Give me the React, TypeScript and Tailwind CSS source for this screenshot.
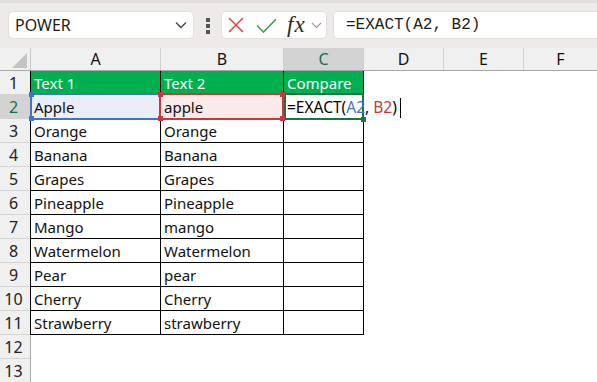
import React from "react";

const rows: [string, string][] = [
  ["Apple", "apple"],
  ["Orange", "Orange"],
  ["Banana", "Banana"],
  ["Grapes", "Grapes"],
  ["Pineapple", "Pineapple"],
  ["Mango", "mango"],
  ["Watermelon", "Watermelon"],
  ["Pear", "pear"],
  ["Cherry", "Cherry"],
  ["Strawberry", "strawberry"],
];

const Handle = ({ pos, color }: { pos: string; color: string }) => (
  <span className={`absolute w-[5px] h-[5px] ${pos} ${color}`} />
);

const Toolbar = () => (
  <div className="h-[48px] border-t-[3px] border-[#e2dedd] bg-[#eeeae9] flex items-start pt-[8px]">
    <div className="ml-[8px] w-[186px] h-[28px] bg-white rounded-[5px] border border-[#e3dfde] flex items-center justify-between pl-[6px] pr-[6px]">
      <span className="text-[16px] text-[#1b1b1b]">POWER</span>
      <svg width="12" height="8" viewBox="0 0 12 8" fill="none">
        <path d="M1 1.5 L6 6.5 L11 1.5" stroke="#444" strokeWidth="1.3" />
      </svg>
    </div>
    <div className="ml-[12px] mt-[7px] flex flex-col gap-[2px]">
      <span className="w-[4px] h-[4px] bg-[#555]" />
      <span className="w-[4px] h-[4px] bg-[#555]" />
      <span className="w-[4px] h-[4px] bg-[#555]" />
    </div>
    <div className="ml-[11px] w-[106px] h-[28px] bg-white rounded-[5px] border border-[#e3dfde] flex items-center pl-[6px]">
      <svg width="16" height="16" viewBox="0 0 16 16" fill="none">
        <path d="M1 1 L15 15 M15 1 L1 15" stroke="#e5453d" strokeWidth="1.5" />
      </svg>
      <svg className="ml-[12px]" width="21" height="15" viewBox="0 0 21 15" fill="none">
        <path d="M1 7.5 L7.5 14 L20 1.2" stroke="#3d9f4c" strokeWidth="1.6" />
      </svg>
      <span className="ml-[10px] font-['Liberation_Serif',serif] italic text-[23px] leading-none tracking-[1px] text-[#2a2a2a] -mt-[2px]">
        fx
      </span>
      <svg className="ml-[5px]" width="11" height="7" viewBox="0 0 11 7" fill="none">
        <path d="M1 1 L5.5 5.5 L10 1" stroke="#9a9a9a" strokeWidth="1.2" />
      </svg>
    </div>
    <div className="ml-[6px] flex-1 h-[28px] bg-white rounded-l-[5px] border border-r-0 border-[#e3dfde] flex items-center pl-[12px]">
      <span className="font-['Liberation_Mono',monospace] text-[16px] text-[#1b1b1b]">
        =EXACT(A2, B2)
      </span>
    </div>
  </div>
);

const ColumnHeaders = () => {
  const cols = [
    { k: "A", w: "w-[130px]" },
    { k: "B", w: "w-[123px]" },
    { k: "C", w: "w-[80px]" },
    { k: "D", w: "w-[80px]" },
    { k: "E", w: "w-[80px]" },
  ];
  return (
    <div className="flex h-[23px] bg-[#f0f0f0] border-b border-[#a8a8a8]">
      <div className="w-[31px] border-r border-[#c8c8c8] relative">
        <svg className="absolute left-[12px] top-[5px]" width="15" height="15" viewBox="0 0 15 15">
          <path d="M15 0 L15 15 L0 15 Z" fill="#c3c3c3" />
        </svg>
      </div>
      {cols.map((c) => (
        <div
          key={c.k}
          className={`${c.w} border-r border-[#d0d0d0] flex items-center justify-center text-[16px] ${
            c.k === "C" ? "bg-[#d3d3d3] text-[#1d6b4f]" : "text-[#111]"
          }`}
        >
          {c.k}
        </div>
      ))}
      <div className="flex-1 flex items-center justify-center text-[16px] text-[#111]">F</div>
    </div>
  );
};

const RowHeader = ({ n, selected }: { n: number; selected?: boolean }) => (
  <div
    className={`w-[30px] h-full border-b border-[#d4d4d4] flex items-center justify-center pr-[3px] pt-[1px] text-[16px] ${
      selected ? "bg-[#d3d3d3] text-[#1d6b4f]" : "bg-[#f0f0f0] text-[#222]"
    }`}
  >
    {n}
  </div>
);

const EmptyTail = () => (
  <>
    <div className="w-[80px]" />
    <div className="w-[80px]" />
    <div className="flex-1" />
  </>
);

export default function App() {
  return (
    <div className="w-[597px] h-[382px] overflow-hidden bg-white font-['Noto_Sans',sans-serif]">
      <Toolbar />
      <ColumnHeaders />

      {/* row 1: table header */}
      <div className="flex h-[24px] text-[15px] leading-[25px]">
        <RowHeader n={1} />
        <div className="w-[131px] bg-[#00b050] text-white border-l border-r border-b border-black pl-[3px]">Text 1</div>
        <div className="w-[123px] bg-[#00b050] text-white border-r border-b border-black pl-[3px]">Text 2</div>
        <div className="w-[80px] bg-[#00b050] text-white border-r border-b border-black pl-[3px]">Compare</div>
        <EmptyTail />
      </div>

      {rows.map(([a, b], i) => {
        const n = i + 2;
        const active = n === 2;
        return (
          <div key={n} className="flex h-[24px] text-[15px] leading-[25px] text-[#111]">
            <RowHeader n={n} selected={active} />
            <div
              className={`w-[131px] border-l border-r border-b border-black pl-[3px] relative ${
                active ? "bg-[#e9eef9]" : ""
              }`}
            >
              {active && (
                <>
                  <span className="absolute -top-[2px] -left-[1px] -right-[1px] -bottom-[2px] border-2 border-[#4472c4] z-10" />
                  <Handle pos="-top-[3px] -left-[2px] z-20" color="bg-[#4472c4]" />
                  <Handle pos="-bottom-[3px] -left-[2px] z-20" color="bg-[#4472c4]" />
                </>
              )}
              <span className="relative z-20">{a}</span>
            </div>
            <div
              className={`w-[123px] border-r border-b border-black pl-[3px] relative ${
                active ? "bg-[#faeaea]" : ""
              }`}
            >
              {active && (
                <>
                  <span className="absolute -top-[2px] -left-[2px] -right-[1px] -bottom-[2px] border-2 border-[#c7393c] z-10" />
                  <Handle pos="-top-[3px] -left-[3px] z-20" color="bg-[#c7393c]" />
                  <Handle pos="-top-[3px] -right-[2px] z-20" color="bg-[#c7393c]" />
                  <Handle pos="-bottom-[3px] -left-[3px] z-20" color="bg-[#c7393c]" />
                  <Handle pos="-bottom-[3px] -right-[2px] z-20" color="bg-[#c7393c]" />
                </>
              )}
              <span className="relative z-20">{b}</span>
            </div>
            <div className="w-[80px] border-r border-b border-black pl-[3px] relative">
              {active && (
                <>
                  <span className="absolute -top-[2px] left-0 -right-[1px] -bottom-[2px] border-2 border-[#1e7145] z-10" />
                  <Handle pos="-bottom-[4px] -right-[3px] z-20" color="bg-[#1e7145]" />
                  <span className="relative z-20 whitespace-nowrap text-black text-[15.5px]">
                    {"=EXACT("}
                    <span className="text-[#4472c4]">A2</span>
                    {", "}
                    <span className="text-[#c7393c]">B2</span>
                    {")"}
                    <span className="inline-block w-px h-[20px] bg-black ml-[3px] align-[-5px]" />
                  </span>
                </>
              )}
            </div>
            <EmptyTail />
          </div>
        );
      })}

      {[12, 13].map((n) => (
        <div key={n} className="flex h-[24px]">
          <div className="w-[31px] h-full border-r border-[#a8a8a8]">
            <RowHeader n={n} />
          </div>
        </div>
      ))}
    </div>
  );
}
